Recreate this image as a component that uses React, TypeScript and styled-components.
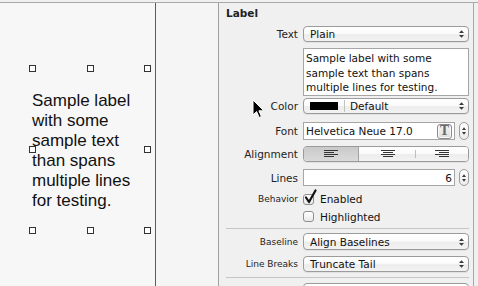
import React from 'react';
import styled, { createGlobalStyle } from 'styled-components';

const Global = createGlobalStyle`
  html, body { margin: 0; padding: 0; width: 478px; height: 286px; overflow: hidden; background: #f0f0f0; }
  * { box-sizing: border-box; }
  #root { width: 478px; height: 286px; }
`;

const Window = styled.div`
  position: relative;
  width: 478px;
  height: 286px;
  padding-top: 2px;
  background: #f0f0f0;
  font-family: "DejaVu Sans", "Liberation Sans", sans-serif;
  color: #1e1e1e;
`;

const Frame = styled.div`
  display: flex;
  height: 284px;
  border-top: 1px solid #a9a9a9;
`;

const Canvas = styled.div`
  flex: none;
  width: 156px;
  border-right: 1px solid #5c5c5c;
  background: #f7f7f7;
  padding: 65px 0 0 32px;
`;

const LabelFrame = styled.div`
  position: relative;
  width: 115px;
  height: 162px;
  padding-top: 4px;
  display: flex;
  align-items: center;
  font-family: "Liberation Sans", Arial, sans-serif;
  font-size: 17px;
  line-height: 20px;
  color: #111;
`;

const Handle = styled.span<{ $x: number; $y: number }>`
  position: absolute;
  left: calc(${p => p.$x}% - 3px);
  top: calc(${p => p.$y}% - 3px);
  width: 7px;
  height: 7px;
  background: #fff;
  border: 1px solid #333;
`;

const MidColumn = styled.div`
  flex: none;
  width: 63px;
  border-right: 1px solid #a0a0a0;
  background: #f5f5f5;
`;

const Inspector = styled.div`
  flex: none;
  width: 255px;
  border-right: 1px solid #a8a8a8;
  background: #f0f0f0;
  padding: 0 4px 0 7px;
  display: flex;
  flex-direction: column;
  overflow: hidden;
`;

const Rest = styled.div`
  flex: 1;
  background: #f0f0f0;
`;

const Header = styled.div`
  flex: none;
  height: 20px;
  display: flex;
  align-items: center;
  font-weight: bold;
  font-size: 10.5px;
  color: #222;
`;

const Row = styled.div<{ $mt: number; $h: number }>`
  display: grid;
  grid-template-columns: 72px 166px;
  column-gap: 5px;
  align-items: center;
  margin-top: ${p => p.$mt}px;
  height: ${p => p.$h}px;
  flex: none;
`;

const Lbl = styled.div<{ $small?: boolean }>`
  text-align: right;
  white-space: nowrap;
  font-size: ${p => (p.$small ? 9 : 10.5)}px;
  color: #222;
`;

const Popup = styled.div`
  grid-column: 2;
  height: 100%;
  border: 1px solid #9b9b9b;
  border-radius: 4px;
  background: linear-gradient(#ffffff 0%, #fbfbfb 45%, #ececec 55%, #f3f3f3 100%);
  display: flex;
  align-items: center;
  padding: 0 3px 0 6px;
  font-size: 10.5px;
  color: #111;
  box-shadow: 0 1px 0 rgba(0, 0, 0, 0.06);
`;

const Value = styled.span`
  flex: 1;
  white-space: nowrap;
`;

const Swatch = styled.span`
  width: 28px;
  height: 8px;
  background: #000;
  flex: none;
`;

const VSep = styled.span`
  width: 1px;
  height: 12px;
  background: #c2c2c2;
  margin: 0 5px 0 6px;
  flex: none;
`;

const TextArea = styled.div`
  grid-column: 2;
  height: 100%;
  border: 1px solid #a6a6a6;
  background: #fff;
  padding: 2px 2px 0 2px;
  font-size: 10.5px;
  line-height: 14.5px;
  color: #111;
`;

const FieldGroup = styled.div`
  grid-column: 2;
  height: 100%;
  display: flex;
  gap: 4px;
`;

const TextField = styled.div<{ $right?: boolean }>`
  flex: 1;
  height: 100%;
  border: 1px solid #a6a6a6;
  background: #fff;
  display: flex;
  align-items: center;
  justify-content: ${p => (p.$right ? 'flex-end' : 'flex-start')};
  padding: 0 2px;
  font-size: 10.5px;
  color: #111;
`;

const TIcon = styled.span`
  margin-left: auto;
  width: 15px;
  height: 15px;
  border: 1px solid #8a8a8a;
  border-radius: 3px;
  background: linear-gradient(#f4f4f4, #dedede);
  display: flex;
  align-items: center;
  justify-content: center;
  font-family: "DejaVu Serif", "Liberation Serif", serif;
  font-weight: bold;
  font-size: 12px;
  color: #6a6a6a;
  box-shadow: inset 0 0 0 1px #fafafa;
`;

const Stepper = styled.div`
  flex: none;
  width: 10px;
  height: 100%;
  border: 1px solid #9b9b9b;
  border-radius: 5px;
  background: linear-gradient(#ffffff, #ececec);
  display: flex;
  align-items: center;
  justify-content: center;
`;

const Segmented = styled.div`
  grid-column: 2;
  height: 100%;
  border: 1px solid #9b9b9b;
  border-radius: 4px;
  overflow: hidden;
  display: grid;
  grid-template-columns: 55px 57px 1fr;
  box-shadow: 0 1px 0 rgba(0, 0, 0, 0.06);
`;

const Segment = styled.div<{ $selected?: boolean; $divider?: boolean }>`
  position: relative;
  display: flex;
  align-items: center;
  justify-content: center;
  background: ${p =>
    p.$selected
      ? 'linear-gradient(#c9c9c9 0%, #d2d2d2 50%, #dadada 100%)'
      : 'linear-gradient(#ffffff 0%, #fbfbfb 45%, #ececec 55%, #f3f3f3 100%)'};
  border-right: ${p => (p.$selected ? '1px solid #a4a4a4' : 'none')};
  &::after {
    content: '';
    display: ${p => (p.$divider ? 'block' : 'none')};
    position: absolute;
    right: 0;
    top: 3px;
    bottom: 3px;
    width: 1px;
    background: #bdbdbd;
  }
`;

const CheckRow = styled.div`
  grid-column: 2;
  display: flex;
  align-items: center;
  gap: 6px;
  font-size: 10.5px;
  color: #111;
`;

const Box = styled.span`
  position: relative;
  flex: none;
  width: 11px;
  height: 11px;
  border: 1px solid #8e8e8e;
  border-radius: 3px;
  background: linear-gradient(#ffffff, #e9e9e9);
`;

const CheckMark = styled.svg`
  position: absolute;
  left: 0px;
  top: -6px;
`;

const Separator = styled.div<{ $mt: number }>`
  flex: none;
  height: 1px;
  background: #c6c6c6;
  margin-top: ${p => p.$mt}px;
`;

const Cursor = styled.svg`
  position: absolute;
  left: 252px;
  top: 99px;
`;

const Arrows = () => (
  <svg width="7" height="10" viewBox="0 0 7 10">
    <path d="M1 4 L6 4 L3.5 1.2 Z" fill="#3a3a3a" />
    <path d="M1 6 L6 6 L3.5 8.8 Z" fill="#3a3a3a" />
  </svg>
);

const SmallArrows = () => (
  <svg width="6" height="12" viewBox="0 0 6 12">
    <path d="M1 5 L5 5 L3 2.2 Z" fill="#3a3a3a" />
    <path d="M1 7 L5 7 L3 9.8 Z" fill="#3a3a3a" />
  </svg>
);

const AlignIcon = ({ mode }: { mode: 'left' | 'center' | 'right' }) => {
  const longW = 14;
  const shortW = 10;
  const x = (w: number) => (mode === 'left' ? 0 : mode === 'center' ? (longW - w) / 2 : longW - w);
  const widths = [longW, shortW, longW, shortW];
  return (
    <svg width="14" height="8" viewBox="0 0 14 8">
      {widths.map((w, i) => (
        <rect key={i} x={x(w)} y={i * 2} width={w} height={1} fill="#333" />
      ))}
    </svg>
  );
};

const handles: Array<[number, number]> = [
  [0, 0], [50, 0], [100, 0],
  [0, 50], [100, 50],
  [0, 100], [50, 100], [100, 100],
];

export default function App() {
  return (
    <>
      <Global />
      <Window>
        <Frame>
          <Canvas>
            <LabelFrame>
              <span>Sample label with some sample text than spans multiple lines for testing.</span>
              {handles.map(([x, y], i) => (
                <Handle key={i} $x={x} $y={y} />
              ))}
            </LabelFrame>
          </Canvas>
          <MidColumn />
          <Inspector>
            <Header>Label</Header>
            <Row $mt={3} $h={16}>
              <Lbl>Text</Lbl>
              <Popup>
                <Value>Plain</Value>
                <Arrows />
              </Popup>
            </Row>
            <Row $mt={6} $h={46}>
              <TextArea>
                Sample label with some
                <br />
                sample text than spans
                <br />
                multiple lines for testing.
              </TextArea>
            </Row>
            <Row $mt={4} $h={16}>
              <Lbl>Color</Lbl>
              <Popup>
                <Swatch />
                <VSep />
                <Value>Default</Value>
                <Arrows />
              </Popup>
            </Row>
            <Row $mt={8} $h={18}>
              <Lbl>Font</Lbl>
              <FieldGroup>
                <TextField>
                  Helvetica Neue 17.0
                  <TIcon>T</TIcon>
                </TextField>
                <Stepper>
                  <SmallArrows />
                </Stepper>
              </FieldGroup>
            </Row>
            <Row $mt={6} $h={16}>
              <Lbl>Alignment</Lbl>
              <Segmented>
                <Segment $selected>
                  <AlignIcon mode="left" />
                </Segment>
                <Segment $divider>
                  <AlignIcon mode="center" />
                </Segment>
                <Segment>
                  <AlignIcon mode="right" />
                </Segment>
              </Segmented>
            </Row>
            <Row $mt={7} $h={17}>
              <Lbl>Lines</Lbl>
              <FieldGroup>
                <TextField $right>6</TextField>
                <Stepper>
                  <SmallArrows />
                </Stepper>
              </FieldGroup>
            </Row>
            <Row $mt={6} $h={14}>
              <Lbl $small>Behavior</Lbl>
              <CheckRow>
                <Box>
                  <CheckMark width="13" height="15" viewBox="0 0 13 15">
                    <path d="M2 8.5 L5 13 L11.5 1.5" stroke="#111" strokeWidth="2.2" fill="none" strokeLinecap="round" strokeLinejoin="round" />
                  </CheckMark>
                </Box>
                Enabled
              </CheckRow>
            </Row>
            <Row $mt={4} $h={13}>
              <CheckRow>
                <Box />
                Highlighted
              </CheckRow>
            </Row>
            <Separator $mt={5} />
            <Row $mt={4} $h={17}>
              <Lbl $small>Baseline</Lbl>
              <Popup>
                <Value>Align Baselines</Value>
                <Arrows />
              </Popup>
            </Row>
            <Row $mt={6} $h={16}>
              <Lbl $small>Line Breaks</Lbl>
              <Popup>
                <Value>Truncate Tail</Value>
                <Arrows />
              </Popup>
            </Row>
            <Separator $mt={5} />
            <Row $mt={5} $h={16}>
              <Popup />
            </Row>
          </Inspector>
          <Rest />
        </Frame>
        <Cursor width="13" height="20" viewBox="0 0 13 20">
          <path d="M1 1 L1 16 L4.6 12.6 L7.2 18.5 L9.4 17.5 L6.9 11.8 L11.8 11.8 Z" fill="#000" stroke="#fff" strokeWidth="1" strokeLinejoin="round" />
        </Cursor>
      </Window>
    </>
  );
}
